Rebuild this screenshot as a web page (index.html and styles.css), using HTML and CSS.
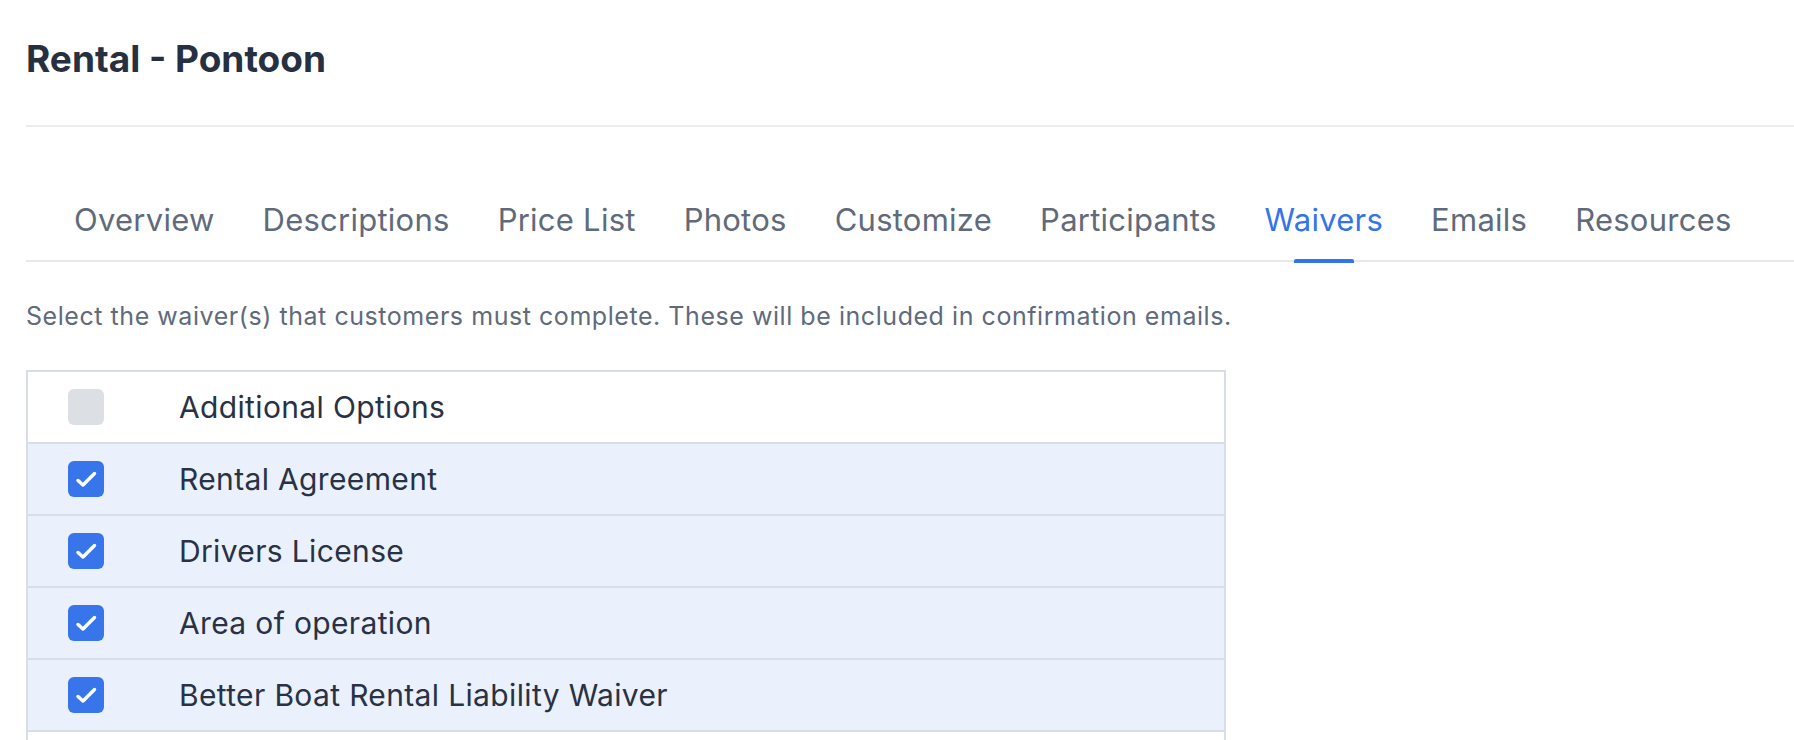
FILE: index.html
```html
<!DOCTYPE html>
<html>
<head>
<title>Rental - Pontoon</title>
<meta charset="utf-8">
<meta name="viewport" content="width=device-width, initial-scale=1">
<link rel="stylesheet" href="styles.css">
</head>
<body>
<div class="page">
	<div class="page-header">
		<h1>Rental - Pontoon</h1>
	</div>
	<ul class="tabs">
		<li><a href="#">Overview</a></li>
		<li><a href="#">Descriptions</a></li>
		<li><a href="#">Price List</a></li>
		<li><a href="#">Photos</a></li>
		<li><a href="#">Customize</a></li>
		<li><a href="#">Participants</a></li>
		<li class="active"><a href="#">Waivers</a></li>
		<li><a href="#">Emails</a></li>
		<li><a href="#">Resources</a></li>
	</ul>
	<p class="hint">Select the waiver(s) that customers must complete. These will be included in confirmation emails.</p>
	<div class="waivers">
		<label class="waiver">
			<span class="box"></span>
			<span class="name">Additional Options</span>
		</label>
		<label class="waiver checked">
			<span class="box"><svg viewBox="0 0 36 36"><path d="M10 19.5L15 24L26.5 12.5"/></svg></span>
			<span class="name">Rental Agreement</span>
		</label>
		<label class="waiver checked">
			<span class="box"><svg viewBox="0 0 36 36"><path d="M10 19.5L15 24L26.5 12.5"/></svg></span>
			<span class="name">Drivers License</span>
		</label>
		<label class="waiver checked">
			<span class="box"><svg viewBox="0 0 36 36"><path d="M10 19.5L15 24L26.5 12.5"/></svg></span>
			<span class="name">Area of operation</span>
		</label>
		<label class="waiver checked">
			<span class="box"><svg viewBox="0 0 36 36"><path d="M10 19.5L15 24L26.5 12.5"/></svg></span>
			<span class="name">Better Boat Rental Liability Waiver</span>
		</label>
		<label class="waiver">
			<span class="box"></span>
		</label>
	</div>
</div>
</body>
</html>
```

FILE: styles.css
```css
body {
	margin: 0;
	font-family: Inter, "Noto Sans", sans-serif;
	color: #283244;
	background-color: #fff;
}
a {
	text-decoration: none;
	color: inherit;
}
.page {
	padding-left: 26px;
}
.page-header {
	padding: 37px 0 44px;
	border-bottom: 2px solid #ececee;
}
h1 {
	margin: 0;
	font-size: 37px;
	line-height: 44px;
	font-weight: 700;
	color: #263041;
}
ul.tabs {
	display: flex;
	margin: 0;
	padding: 75px 0 0 24px;
	list-style: none;
	border-bottom: 2px solid #e7e8ee;
}
ul.tabs li {
	position: relative;
}
ul.tabs li a {
	display: block;
	padding: 0 24px 22px;
	font-size: 31px;
	line-height: 36px;
	letter-spacing: 0.25px;
	color: #5f6a7b;
}
ul.tabs li.active a {
	color: #3474ea;
}
ul.tabs li.active::after {
	content: "";
	position: absolute;
	left: 50%;
	bottom: -3px;
	width: 60px;
	height: 4px;
	margin-left: -30px;
	border-radius: 2px 2px 0 0;
	background-color: #3474ea;
}
.hint {
	margin: 39px 0;
	font-size: 25px;
	line-height: 30px;
	letter-spacing: 0.55px;
	color: #5f6a7b;
}
.waivers {
	width: 1196px;
	border: 2px solid #d9dee6;
	border-bottom: none;
}
.waiver {
	display: flex;
	align-items: center;
	height: 70px;
	padding-left: 40px;
	border-bottom: 2px solid #d9dee6;
	background-color: #fff;
}
.waiver.checked {
	background-color: #eaf0fc;
}
.box {
	flex: none;
	width: 36px;
	height: 36px;
	border-radius: 6px;
	background-color: #dcdfe4;
}
.box svg {
	display: block;
	width: 36px;
	height: 36px;
	fill: none;
	stroke: #fff;
	stroke-width: 3.5;
	stroke-linecap: round;
	stroke-linejoin: round;
}
.waiver.checked .box {
	background-color: #3874ea;
}
.name {
	margin-left: 75px;
	font-size: 30px;
	line-height: 36px;
	letter-spacing: 0.35px;
	color: #283244;
}
```
